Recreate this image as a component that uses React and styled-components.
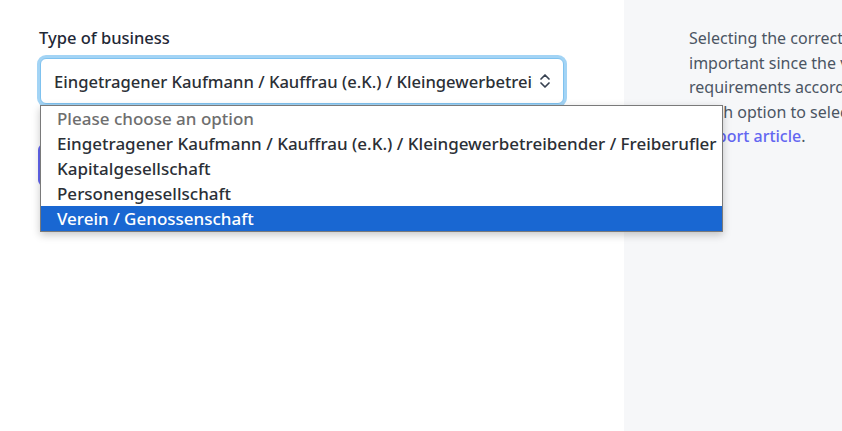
import styled, { createGlobalStyle } from "styled-components";

const options = [
  { label: "Please choose an option", placeholder: true },
  { label: "Eingetragener Kaufmann / Kauffrau (e.K.) / Kleingewerbetreibender / Freiberufler" },
  { label: "Kapitalgesellschaft" },
  { label: "Personengesellschaft" },
  { label: "Verein / Genossenschaft", selected: true },
];

const GlobalStyle = createGlobalStyle`
  html, body {
    margin: 0;
    padding: 0;
    height: 100%;
    overflow: hidden;
    background: #ffffff;
  }
  body {
    font-family: "Noto Sans", "Open Sans", Arial, sans-serif;
    font-size: 17px;
  }
`;

export default function App() {
  return (
    <>
      <GlobalStyle />
      <Page>
        <Main>
          <Label>Type of business</Label>
          <SelectWrap>
            <SelectBox>
              <SelectValue>
                Eingetragener Kaufmann / Kauffrau (e.K.) / Kleingewerbetreibender / Freiberufler
              </SelectValue>
              <Chevrons width="12" height="16" viewBox="0 0 12 16">
                <path d="M2 6 L6 2 L10 6" />
                <path d="M2 10 L6 14 L10 10" />
              </Chevrons>
            </SelectBox>
            <OptionList>
              {options.map((option, index) => (
                <OptionRow
                  key={index}
                  $placeholder={option.placeholder}
                  $selected={option.selected}
                >
                  {option.label}
                </OptionRow>
              ))}
            </OptionList>
          </SelectWrap>
          <SubmitButton>Continue</SubmitButton>
        </Main>
        <Aside>
          <HelpText>
            Selecting the correct type of business is
            <br />
            important since the verification
            <br />
            requirements according to the type differ.
            <br />
            which option to select, please read our
            <br />
            <HelpLink>support article</HelpLink>.
          </HelpText>
        </Aside>
      </Page>
    </>
  );
}

const Page = styled.div`
  display: flex;
  width: 100%;
  height: 100vh;
`;

const Main = styled.div`
  width: 624px;
  flex-shrink: 0;
  box-sizing: border-box;
  padding: 26px 0 0 38px;
  background: #ffffff;
  display: flex;
  flex-direction: column;
  align-items: flex-start;
`;

const Label = styled.div`
  font-size: 16.5px;
  line-height: 24px;
  font-weight: 500;
  color: #1f2937;
  margin-left: 1px;
  margin-bottom: 8px;
`;

const SelectWrap = styled.div`
  position: relative;
  width: 528px;
`;

const SelectBox = styled.div`
  display: flex;
  align-items: center;
  gap: 6px;
  box-sizing: border-box;
  height: 46px;
  margin: 0 2px;
  padding: 0 12px 0 13px;
  border: 1px solid #7fc2ef;
  border-radius: 6px;
  box-shadow: 0 0 0 3px #a3d4f5;
  background: #ffffff;
`;

const SelectValue = styled.div`
  flex: 1;
  overflow: hidden;
  white-space: nowrap;
  font-size: 16.6px;
  font-weight: 500;
  color: #2b2f36;
`;

const Chevrons = styled.svg`
  flex-shrink: 0;
  fill: none;
  stroke: #374151;
  stroke-width: 1.7;
  stroke-linecap: round;
  stroke-linejoin: round;
`;

const OptionList = styled.ul`
  position: absolute;
  top: 47px;
  left: 2px;
  width: 681px;
  margin: 0;
  padding: 0;
  list-style: none;
  background: #ffffff;
  border: 1px solid #7a7a7a;
  box-shadow: 0 3px 8px rgba(0, 0, 0, 0.22);
  z-index: 10;
`;

const OptionRow = styled.li`
  height: 25px;
  line-height: 25px;
  padding-left: 16px;
  white-space: nowrap;
  font-size: 17px;
  font-weight: 500;
  color: ${({ $placeholder, $selected }) =>
    $selected ? "#ffffff" : $placeholder ? "#6e6e6e" : "#2b2f36"};
  background: ${({ $selected }) => ($selected ? "#1967d2" : "transparent")};
`;

const SubmitButton = styled.button`
  margin-top: 40px;
  height: 42px;
  padding: 0 20px;
  border: none;
  border-radius: 6px;
  background: #6366f1;
  color: #ffffff;
  font-family: inherit;
  font-size: 16px;
  font-weight: 600;
`;

const Aside = styled.div`
  flex: 1;
  background: #f6f7f9;
  padding: 26px 0 0 65px;
  overflow: hidden;
`;

const HelpText = styled.p`
  margin: 0;
  white-space: nowrap;
  font-size: 16px;
  line-height: 24.5px;
  color: #4b5563;
`;

const HelpLink = styled.a`
  color: #6366f1;
  font-weight: 500;
  text-decoration: none;
`;
